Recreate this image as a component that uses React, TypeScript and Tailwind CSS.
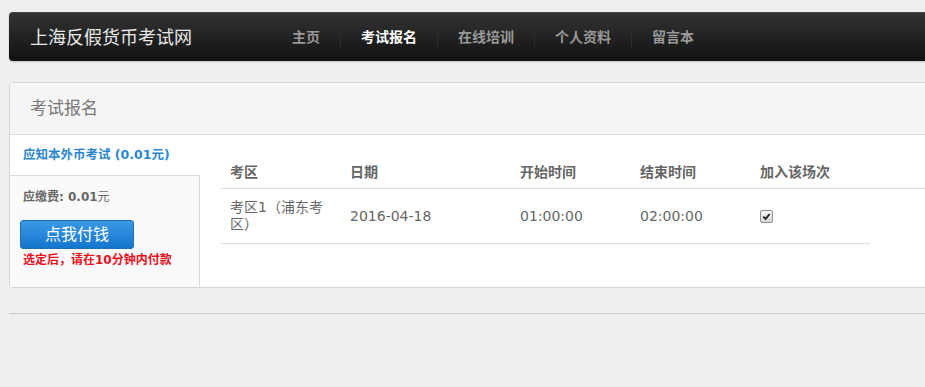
import React from 'react';

const navItems = ['主页', '考试报名', '在线培训', '个人资料', '留言本'];

const font = { fontFamily: '"DejaVu Sans", "Noto Sans CJK SC", sans-serif' };

export default function App() {
  return (
    <div
      className="min-h-screen overflow-hidden bg-[#efefef] pl-[9px] pt-[12px] text-[#555]"
      style={font}
    >
      <header className="-mr-[20px] flex h-[49px] items-center rounded-l-[4px] border-t border-[#444] bg-gradient-to-b from-[#333333] to-[#121212] shadow-[0_1px_2px_rgba(0,0,0,0.2)]">
        <div className="pl-[21px] pr-[80px] text-[18px] text-[#e8e8e8]">上海反假货币考试网</div>
        <ul className="flex h-full items-center">
          {navItems.map((item, i) => (
            <li key={item} className="flex h-full items-center">
              {i > 0 ? <span className="h-[22px] w-px bg-[#2b2b2b]" /> : null}
              <a
                className={`px-[20px] text-[14px] font-bold ${
                  item === '考试报名' ? 'text-white' : 'text-[#999]'
                }`}
              >
                {item}
              </a>
            </li>
          ))}
        </ul>
      </header>

      <section className="-mr-[20px] mt-[21px] rounded-l-[4px] border border-[#d6d6d6] bg-white">
        <div className="flex h-[52px] items-center rounded-tl-[4px] border-b border-[#dcdcdc] bg-[#f5f5f5] pl-[20px] text-[17px] text-[#777]">
          考试报名
        </div>

        <div className="flex">
          <aside className="flex w-[190px] flex-col">
            <div className="flex h-[40px] items-center pl-[13px] text-[12.5px] font-bold text-[#2a87cf]">
              应知本外币考试 (0.01元)
            </div>
            <div className="flex-1 border-t border-r border-[#d9d9d9] bg-[#fafafa] pb-[18px] pl-[10px] pt-[12px]">
              <div className="pl-[3px] text-[12px] font-bold text-[#666]">
                应缴费: 0.01<span className="font-normal">元</span>
              </div>
              <button className="mt-[14px] flex h-[29px] w-[114px] items-center justify-center rounded-[3px] border border-[#1a6fb8] bg-gradient-to-b from-[#3a9ae6] to-[#1275cc] text-[16px] text-white">
                点我付钱
              </button>
              <div className="mt-[2px] pl-[3px] text-[12px] font-bold text-[#e8101c]">
                选定后，请在10分钟内付款
              </div>
            </div>
          </aside>

          <div className="flex-1 pl-[20px] pt-[22px]">
            <div className="flex h-[32px] items-center border-b border-[#e2e2e2] text-[14px] font-bold text-[#666]">
              <div className="w-[120px] pl-[10px]">考区</div>
              <div className="w-[170px] pl-[10px]">日期</div>
              <div className="w-[120px] pl-[10px]">开始时间</div>
              <div className="w-[120px] pl-[10px]">结束时间</div>
              <div className="w-[120px] pl-[10px]">加入该场次</div>
            </div>
            <div className="flex h-[55px] w-[650px] items-center border-b border-[#e2e2e2] text-[14px] text-[#666]">
              <div className="w-[120px] pl-[10px] pr-[4px] leading-[17px]">考区1（浦东考区）</div>
              <div className="w-[170px] pl-[10px]">2016-04-18</div>
              <div className="w-[120px] pl-[10px]">01:00:00</div>
              <div className="w-[120px] pl-[10px]">02:00:00</div>
              <div className="w-[120px] pl-[10px]">
                <span className="flex h-[13px] w-[13px] items-center justify-center rounded-[2px] border border-[#8f8f8f] bg-gradient-to-b from-[#f6f6f6] to-[#d6d6d6]">
                  <svg viewBox="0 0 10 10" className="h-[9px] w-[9px]">
                    <path d="M1.5 5.2 L4 7.6 L8.6 2.2" fill="none" stroke="#1a1a1a" strokeWidth="2" />
                  </svg>
                </span>
              </div>
            </div>
          </div>
        </div>
      </section>

      <div className="-mr-[20px] mt-[25px] border-t border-[#cccccc]" />
    </div>
  );
}
